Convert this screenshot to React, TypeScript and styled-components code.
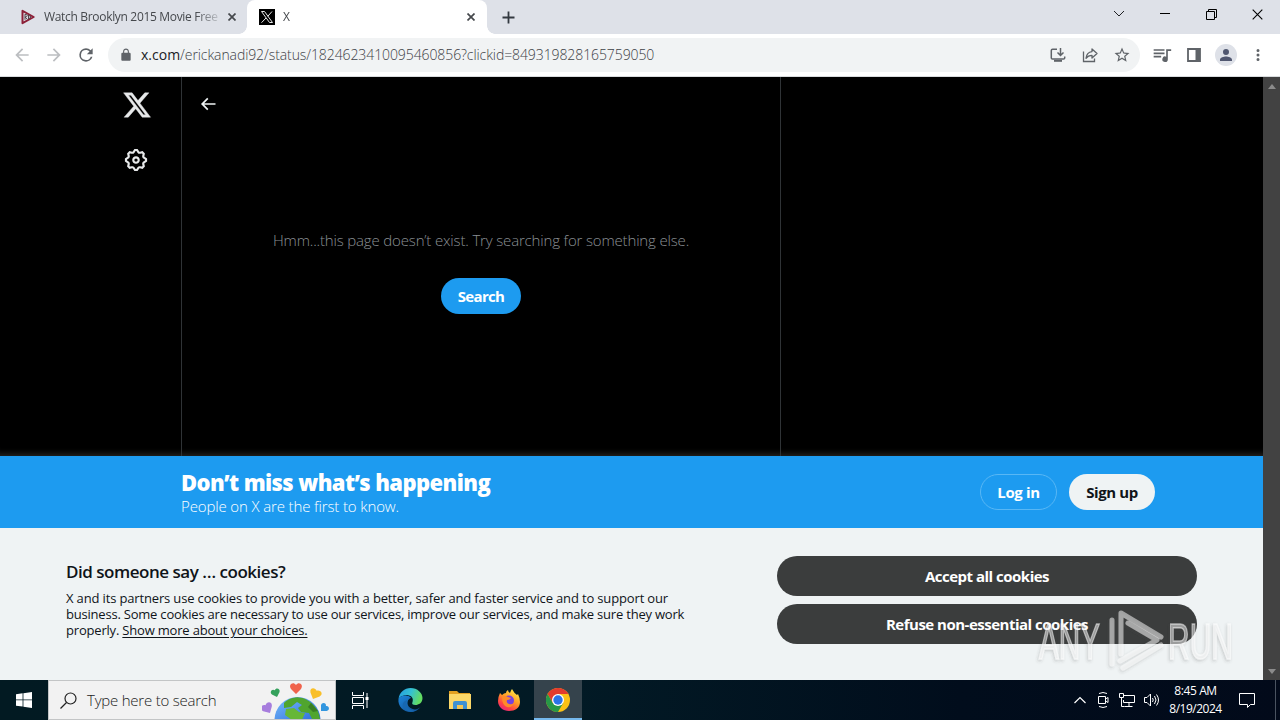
import React from "react";
import styled, { createGlobalStyle, css } from "styled-components";

const GlobalStyle = createGlobalStyle`
  * {
    box-sizing: border-box;
  }

  body {
    margin: 0;
    overflow: hidden;
    background: #000;
    font-family: "Open Sans", "Noto Sans", sans-serif;
  }

  svg {
    display: block;
    flex: none;
  }
`;

const Screen = styled.div`
  position: relative;
  display: flex;
  flex-direction: column;
  width: 1280px;
  height: 720px;
  overflow: hidden;
`;

interface ITextProps {
  $size: number
  $line?: number
  $weight?: number
  $color?: string
  $spacing?: number
}

const Text = styled.span<ITextProps>`
  display: block;
  white-space: nowrap;
  font-size: ${({ $size }) => $size}px;
  line-height: ${({ $line, $size }) => $line || $size + 4}px;
  font-weight: ${({ $weight }) => $weight || 400};
  color: ${({ $color }) => $color || "#0f1419"};
  letter-spacing: ${({ $spacing }) => $spacing || 0}px;
`;

/* browser window */

const TabStrip = styled.div`
  display: flex;
  height: 34px;
  flex: none;
  background: #dee1e8;
`;

const Tab = styled.div<{ $active?: boolean }>`
  position: relative;
  display: flex;
  align-items: center;
  width: ${({ $active }) => ($active ? 240 : 247)}px;
  padding: ${({ $active }) => ($active ? "0 12px 0 12px" : "0 11px 0 20px")};
  gap: 8px;
  ${({ $active }) => $active && css`
    background: #fff;
    border-radius: 8px 8px 0 0;

    &::before,
    &::after {
      content: "";
      position: absolute;
      bottom: 0;
      width: 8px;
      height: 8px;
    }

    &::before {
      left: -8px;
      background: radial-gradient(circle at 0 0, #dee1e8 7.5px, #fff 8px);
    }

    &::after {
      right: -8px;
      background: radial-gradient(circle at 100% 0, #dee1e8 7.5px, #fff 8px);
    }
  `}
`;

const TabTitle = styled.div`
  flex: 1;
  overflow: hidden;
  mask-image: linear-gradient(90deg, #000 86%, transparent 102%);
`;

const NewTab = styled.div`
  display: flex;
  align-items: center;
  flex: 1;
  padding-left: 15px;
`;

const WindowButtons = styled.div`
  display: flex;
  align-items: center;
  width: 184px;
  height: 28px;

  & > * {
    display: flex;
    justify-content: center;
    width: 46px;
  }
`;

const Toolbar = styled.div`
  display: flex;
  align-items: center;
  flex: none;
  height: 43px;
  padding: 0 0 1px 12px;
  background: #fff;
  border-bottom: 1px solid #d9dcde;
`;

const NavButtons = styled.div`
  display: flex;
  flex: none;
  gap: 12px;
  width: 96px;
`;

const AddressBar = styled.div`
  display: flex;
  align-items: center;
  flex: none;
  width: 1032px;
  height: 34px;
  padding: 0 9px 0 11px;
  border-radius: 17px;
  background: #f1f3f4;
`;

const Url = styled.div`
  display: flex;
  flex: 1;
  padding: 1px 0 0 8px;
`;

const AddressIcons = styled.div`
  display: flex;
  gap: 14px;
`;

const ToolbarIcons = styled.div`
  display: flex;
  align-items: center;
  padding-left: 12px;
  gap: 12px;

  & > :nth-child(2) {
    margin-left: 2px;
  }

  & > :nth-child(3) {
    margin-left: 1px;
  }
`;

const Avatar = styled.div`
  display: flex;
  align-items: center;
  justify-content: center;
  width: 22px;
  height: 22px;
  border-radius: 50%;
  background: #dee1e8;
`;

/* page */

const Viewport = styled.div`
  display: flex;
  height: 603px;
  flex: none;
  background: #000;
`;

const Page = styled.div`
  display: flex;
  flex-direction: column;
  width: 1263px;
`;

const Scrollbar = styled.div`
  display: flex;
  flex-direction: column;
  align-items: center;
  justify-content: space-between;
  width: 17px;
  padding: 7px 0 6px;
  background: #424242;
`;

const Main = styled.div`
  display: flex;
  height: 379px;
  box-shadow: inset 0 -8px 6px -6px #292724;
`;

const Sidebar = styled.div`
  display: flex;
  flex-direction: column;
  width: 181px;
  padding: 13px 0 0 122px;
  gap: 27px;

  & > :last-child {
    margin-left: 1px;
  }
`;

const Column = styled.div`
  width: 600px;
  border: solid #2f3336;
  border-width: 0 1px;
`;

const ColumnHeader = styled.div`
  height: 53px;
  padding: 17px 0 0 16px;
`;

const Empty = styled.div`
  display: flex;
  flex-direction: column;
  align-items: center;
  padding-top: 100px;
  gap: 28px;
`;

interface IPillProps {
  $width: number
  $height?: number
  $bg?: string
  $border?: string
}

const Pill = styled.div<IPillProps>`
  display: flex;
  align-items: center;
  justify-content: center;
  width: ${({ $width }) => $width}px;
  height: ${({ $height }) => $height || 36}px;
  padding-top: 1px;
  border-radius: 20px;
  border: 1px solid ${({ $border }) => $border || "transparent"};
  background: ${({ $bg }) => $bg || "transparent"};
`;

const LoginBar = styled.div`
  display: flex;
  justify-content: space-between;
  height: 72px;
  padding: 12px 108px 0 181px;
  background: #1d9bf0;
`;

const LoginButtons = styled.div`
  display: flex;
  gap: 12px;
  padding-top: 6px;
`;

const Cookies = styled.div`
  display: flex;
  justify-content: space-between;
  flex: 1;
  padding: 28px 66px 0;
  background: #eff3f4;
`;

const CookieCopy = styled.div`
  padding-top: 6px;

  & > :first-child {
    margin-bottom: 8px;
  }
`;

const CookieButtons = styled.div`
  display: flex;
  flex-direction: column;
  gap: 8px;
`;

const Underlined = styled.span`
  text-decoration: underline;
  text-underline-offset: 2px;
`;

const Watermark = styled.div`
  position: absolute;
  left: 1032px;
  top: 604px;
`;

/* taskbar */

const Taskbar = styled.div`
  display: flex;
  height: 40px;
  flex: none;
  background: linear-gradient(90deg, #021a22 0%, #021a25 45%, #010d1c 75%, #020a1a 100%);
`;

const TaskButton = styled.div<{ $active?: boolean; $width?: number }>`
  display: flex;
  align-items: center;
  justify-content: center;
  width: ${({ $width }) => $width || 49.5}px;
  height: 40px;
  ${({ $active }) => $active && css`
    background: #35434c;
    border-bottom: 2px solid #76b9ed;
    padding-top: 2px;
  `}
`;

const SearchBox = styled.div`
  display: flex;
  align-items: center;
  width: 288px;
  padding-left: 11px;
  gap: 10px;
  border: 1px solid #c3c5c6;
  background: #f2f2f2;

  & > :last-child {
    margin-left: auto;
    margin-right: 1px;
  }
`;

const Spacer = styled.div`
  flex: 1;
`;

const Tray = styled.div`
  display: flex;
  align-items: center;
  padding-right: 13px;
  gap: 7px;
`;

const Clock = styled.div`
  width: 55px;
  text-align: center;
`;

const DesktopEdge = styled.div`
  width: 5px;
  border-left: 1px solid #4a5360;
`;

const XLogo = () => (
  <svg width="30" height="30" viewBox="0 0 24 24" fill="#e7e9ea" stroke="#e7e9ea" strokeWidth=".35">
    <path d="M18.244 2.25h3.308l-7.227 8.26 8.502 11.24H16.17l-5.214-6.817L4.99 21.75H1.68l7.73-8.835L1.254 2.25H8.08l4.713 6.231zm-1.161 17.52h1.833L7.084 4.126H5.117z" />
  </svg>
);

const CloseIcon = ({ size = 8, width = 1.7, color = "#45484c" }) => (
  <svg width={size} height={size} viewBox="0 0 8 8" stroke={color} strokeWidth={width}>
    <path d="M.5.5l7 7M7.5.5l-7 7" />
  </svg>
);

const Material = ({ d, size = 18, color = "#5f6368" }: { d: string; size?: number; color?: string }) => (
  <svg width={size} height={size} viewBox="0 0 24 24" fill={color}>
    <path d={d} />
  </svg>
);

const BACK = "M20 11H7.83l5.59-5.59L12 4l-8 8 8 8 1.41-1.41L7.83 13H20v-2z";
const FORWARD = "M12 4l-1.41 1.41L16.17 11H4v2h12.17l-5.58 5.59L12 20l8-8z";
const RELOAD = "M17.65 6.35A7.96 7.96 0 0 0 12 4a8 8 0 1 0 7.73 10h-2.08A6 6 0 1 1 12 6c1.66 0 3.14.69 4.22 1.78L13 11h7V4l-2.35 2.35z";
const LOCK = "M18 8h-1V6c0-2.76-2.24-5-5-5S7 3.24 7 6v2H6c-1.1 0-2 .9-2 2v10c0 1.1.9 2 2 2h12c1.1 0 2-.9 2-2V10c0-1.1-.9-2-2-2zM8.9 8V6c0-1.71 1.39-3.1 3.1-3.1s3.1 1.39 3.1 3.1v2H8.9z";
const STAR = "M22 9.24l-7.19-.62L12 2 9.19 8.63 2 9.24l5.46 4.73L5.82 21 12 17.27 18.18 21l-1.63-7.03L22 9.24zM12 15.4l-3.76 2.27 1-4.28-3.32-2.88 4.38-.38L12 6.1l1.71 4.04 4.38.38-3.32 2.88 1 4.28L12 15.4z";
const QUEUE = "M2 5h13v2H2zM2 9h13v2H2zM2 13h9v2H2zM17 5h6v2.2h-4V17a3.3 3.3 0 1 1-2-3z";
const PERSON = "M12 12a4 4 0 1 0 0-8 4 4 0 0 0 0 8zm0 2c-3 0-8 1.4-8 4.3V20h16v-1.7c0-2.9-5-4.3-8-4.3z";
const MENU = "M12 8a2 2 0 1 0 0-4 2 2 0 0 0 0 4zm0 2a2 2 0 1 0 0 4 2 2 0 0 0 0-4zm0 6a2 2 0 1 0 0 4 2 2 0 0 0 0-4z";
const GEAR = "M10.54 1.75h2.92l1.57 2.36c.11.17.32.25.53.21l2.53-.59 2.17 2.17-.58 2.54c-.05.2.04.41.21.53l2.36 1.57v2.92l-2.36 1.57c-.17.12-.26.33-.21.53l.58 2.54-2.17 2.17-2.53-.59c-.21-.04-.42.04-.53.21l-1.57 2.36h-2.92l-1.58-2.36c-.11-.17-.32-.25-.52-.21l-2.54.59-2.17-2.17.58-2.54c.05-.2-.03-.41-.21-.53l-2.35-1.57v-2.92L4.1 8.97c.18-.12.26-.33.21-.53L3.73 5.9 5.9 3.73l2.54.59c.2.04.41-.04.52-.21l1.58-2.36zm1.07 2l-.98 1.47C10.05 6.08 9 6.5 7.99 6.27l-1.46-.34-.6.6.33 1.46c.24 1.01-.18 2.07-1.05 2.64l-1.46.98v.78l1.46.98c.87.57 1.29 1.63 1.05 2.64l-.33 1.46.6.6 1.46-.34c1.01-.23 2.06.19 2.64 1.05l.98 1.47h.78l.97-1.47c.58-.86 1.63-1.28 2.65-1.05l1.45.34.61-.6-.34-1.46c-.23-1.01.18-2.07 1.05-2.64l1.47-.98v-.78l-1.47-.98c-.87-.57-1.28-1.63-1.05-2.64l.34-1.46-.61-.6-1.45.34c-1.02.23-2.07-.19-2.65-1.05l-.97-1.47h-.78zM12 10.5c-.83 0-1.5.67-1.5 1.5s.67 1.5 1.5 1.5 1.5-.67 1.5-1.5-.67-1.5-1.5-1.5zM8.5 12c0-1.93 1.56-3.5 3.5-3.5 1.93 0 3.5 1.57 3.5 3.5s-1.57 3.5-3.5 3.5c-1.94 0-3.5-1.57-3.5-3.5z";
const X_BACK = "M7.414 13l5.043 5.04-1.414 1.42L3.586 12l7.457-7.46 1.414 1.42L7.414 11H21v2H7.414z";

const PlayFavicon = () => (
  <svg width="16" height="16" viewBox="0 0 16 16" fill="none">
    <path d="M2.5 1.8v12.4L13.7 8z" stroke="#8c2038" strokeWidth="2" strokeLinejoin="round" />
    <path d="M5 5.2v5.6M5 5.5c3-.5 3 2.5 0 2.5l2.5 2.4M8.5 6v4l2.5-2z" stroke="#54424a" strokeWidth="1" />
  </svg>
);

const XFavicon = () => (
  <svg width="16" height="16" viewBox="0 0 16 16">
    <path d="M0 0h16v16H0z" fill="#000" />
    <path d="M2.5 2.5h3L13.5 13.5h-3zM13 2.5L8.8 7.3M7 9l-4.500 4.700" fill="none" stroke="#e8e8e8" />
  </svg>
);

const InstallIcon = () => (
  <svg width="18" height="18" viewBox="0 0 18 18" fill="none" stroke="#5f6368" strokeWidth="1.5">
    <path d="M8 3.200H3.500Q2.300 3.200 2.300 4.400V12q0 1 1.200 1h11q1.200 0 1.200-1v-1.500M11.500 2v7M8.500 6.500l3 3 3-3" />
    <path d="M5 14.800h8" strokeWidth="2" />
  </svg>
);

const ShareIcon = () => (
  <svg width="18" height="18" viewBox="0 0 18 18" fill="none" stroke="#5f6368" strokeWidth="1.3">
    <path d="M2.500 5.500V15.500H13.500V12.500" />
    <path d="M11 3l5 4.500-5 4.500V9.300C8 9.300 6.400 10.300 5 12.300 5.400 8.600 7.500 6 11 5.600z" strokeLinejoin="round" />
  </svg>
);

const PanelIcon = () => (
  <svg width="16" height="16" viewBox="0 0 16 16">
    <path d="M2 2h12v12H2z" fill="none" stroke="#5f6368" strokeWidth="1.8" />
    <path d="M9.500 2H14v12H9.500z" fill="#5f6368" />
  </svg>
);

const Hearts = () => (
  <svg width="72" height="38" viewBox="0 0 72 38">
    <defs>
      <clipPath id="globe">
        <circle cx="35.5" cy="39" r="23" />
      </clipPath>
      <linearGradient id="sea" x1="0" y1="0" x2="1" y2="1">
        <stop offset="0" stopColor="#7dc2fb" />
        <stop offset="1" stopColor="#2866dc" />
      </linearGradient>
    </defs>
    <g clipPath="url(#globe)">
      <path d="M12 14h48v26H12z" fill="url(#sea)" />
      <path d="M22 22c5-6 16-8 23-3 7 4 12 10 13 19h-8l-3-6-8-1-3-4 4-3-5-3-6 5-7 1z" fill="#50a52e" />
      <path d="M24 28l8-1 5 4 6 1-3 7H30l-7-5z" fill="#66b737" />
      <path d="M49 22l7 8-5 1-5-5z" fill="#397f24" />
    </g>
    <path d="M0 0L-5-5C-8-9-3-13 0-9 3-13 8-9 5-5z" transform="translate(34 13)" fill="#f0634c" />
    <path d="M0 0L-4-4C-6-7-2-10 0-7 2-10 6-7 4-4z" transform="translate(15 16) rotate(-18)" fill="#35a15c" />
    <path d="M0 0L-5-5C-8-9-3-12 0-9 3-12 8-9 5-5z" transform="translate(51 18) rotate(24)" fill="#f9bf28" />
    <path d="M0 0L-5-5C-8-9-3-12 0-9 3-12 8-9 5-5z" transform="translate(8 32) rotate(-30)" fill="#a77ddd" />
    <path d="M0 0L-4-4C-6-7-2-10 0-7 2-10 6-7 4-4z" transform="translate(59 30) rotate(45)" fill="#3296df" />
  </svg>
);

const WindowsIcon = () => (
  <svg width="16" height="16" viewBox="0 0 16 16" fill="#fff">
    <path d="M0 2.200l6.600-.9v6.200H0zM7.400 1.200L16 0v7.500H7.400zM0 8.300h6.600v6.300L0 13.700zM7.400 8.300H16V16l-8.600-1.200z" />
  </svg>
);

const EdgeIcon = () => (
  <svg width="26" height="26" viewBox="-.5 0 26 26">
    <defs>
      <linearGradient id="edgeTop" x1="0" y1="0" x2="1" y2=".3">
        <stop offset="0" stopColor="#239be0" />
        <stop offset=".55" stopColor="#35c1d2" />
        <stop offset="1" stopColor="#63dc62" />
      </linearGradient>
      <linearGradient id="edgeLow" x1="0" y1="0" x2="1" y2="1">
        <stop offset="0" stopColor="#1d86dc" />
        <stop offset="1" stopColor="#114a8b" />
      </linearGradient>
    </defs>
    <path d="M1 12C2 5 7 1 13 1c7 0 12 5 12 10 0 5-4 7-7 7-3 0-4-1-3-3 1-3 0-6-5-7-4 0-7 1-9 4z" fill="url(#edgeTop)" />
    <path d="M1 12c2-4 9-5 13-1-4 0-6 7-1 10 3 2 7 2 10-1-2 3-6 5-10 5C6 25 0 19 1 12z" fill="url(#edgeLow)" />
    <path d="M10 13c-4 6 3 12 9 10-4 3-10 2-13-2-2-4 0-7 4-8z" fill="#1767b0" />
  </svg>
);

const FolderIcon = () => (
  <svg width="24" height="22" viewBox="0 0 24 22">
    <path d="M1 2h8l2 2h11v5H1z" fill="#e2a021" />
    <path d="M1 5h22v15H1z" fill="#fbd768" />
    <path d="M5 20v-6q0-2 2-2h10q2 0 2 2v6h-4v-4H9v4z" fill="#3e91d1" />
    <path d="M9 16h6v4H9z" fill="#f3c653" />
  </svg>
);

const FirefoxIcon = () => (
  <svg width="24" height="24" viewBox="0 0 24 24">
    <defs>
      <linearGradient id="fox" x1=".8" y1="0" x2=".2" y2="1">
        <stop offset="0" stopColor="#fff04a" />
        <stop offset=".45" stopColor="#ff9a26" />
        <stop offset=".75" stopColor="#ff4544" />
        <stop offset="1" stopColor="#e42283" />
      </linearGradient>
    </defs>
    <path d="M3 5l2 2q2-2 4-2 0-2 2-3 0 2 2 3 1-3 2-4 2 4 5 6l1-1q2 4 2 8c0 6-5 9-11 9S1 19 1 13q0-4 2-8z" fill="url(#fox)" />
    <circle cx="12" cy="12.5" r="5" fill="#7542e0" />
    <path d="M5 9q3-2 6 0l3 1q-1 2-4 2-1 3 2 4 3 1 5-1-2 5-7 4-5-2-5-10z" fill="#ff8b28" />
  </svg>
);

const ChromeIcon = () => (
  <svg width="24" height="24" viewBox="0 0 24 24">
    <circle cx="12" cy="12" r="12" fill="#fbc116" />
    <path d="M1.600 6A12 12 0 0 1 22.400 6H12l-5.200 9z" fill="#e33b2e" />
    <path d="M1.600 6A12 12 0 0 0 12 24l5.200-9H6.800z" fill="#279847" />
    <circle cx="12" cy="12" r="6" fill="#fff" />
    <circle cx="12" cy="12" r="4.7" fill="#2a74e8" />
  </svg>
);

const AnyRun = () => (
  <svg width="220" height="76" viewBox="0 0 220 76">
    <defs>
      <filter id="soft" x="-10%" y="-10%" width="120%" height="120%">
        <feDropShadow dx="-1" dy="1.5" stdDeviation="1.5" floodColor="#444" floodOpacity=".4" />
      </filter>
    </defs>
    <g filter="url(#soft)" fill="#fff" fillOpacity=".45" stroke="#fff" strokeOpacity=".5">
      <g fontFamily="Liberation Sans, sans-serif" fontSize="50" strokeWidth="1.5">
        <text x="7" y="55" textLength="61" lengthAdjust="spacingAndGlyphs">ANY</text>
        <text x="136" y="55" textLength="65" lengthAdjust="spacingAndGlyphs">RUN</text>
      </g>
      <g fill="none" strokeWidth="5" strokeLinecap="round" strokeLinejoin="round">
        <path d="M89 50V9l40 24" />
        <path d="M80 16v44M96 19l29 17-37 21" />
        <path d="M91 64l38-23" />
      </g>
    </g>
  </svg>
);

const App = () => {
  return (
    <Screen>
      <GlobalStyle />
      <TabStrip>
        <Tab>
          <PlayFavicon />
          <TabTitle>
            <Text $size={12} $color="#45484c" $spacing={-0.32}>Watch Brooklyn 2015 Movie Free</Text>
          </TabTitle>
          <CloseIcon />
        </Tab>
        <Tab $active>
          <XFavicon />
          <TabTitle>
            <Text $size={12} $color="#45484c">X</Text>
          </TabTitle>
          <CloseIcon />
        </Tab>
        <NewTab>
          <svg width="13" height="13" viewBox="0 0 13 13" stroke="#333940" strokeWidth="1.8">
            <path d="M6.500 .5v12M.5 6.500h12" />
          </svg>
        </NewTab>
        <WindowButtons>
          <div>
            <svg width="12" height="8" viewBox="0 0 12 8" fill="none" stroke="#202124"><path d="M1 1l5 5 5-5" /></svg>
          </div>
          <div>
            <svg width="10" height="2" viewBox="0 0 10 2"><path d="M0 0h10v1H0z" /></svg>
          </div>
          <div>
            <svg width="11" height="11" viewBox="0 0 11 11" fill="none" stroke="#000">
              <path d="M.5 2.500h8v8h-8zM2.500 2.500v-2h8v8h-2" />
            </svg>
          </div>
          <div><CloseIcon size={11} width={0.8} color="#000" /></div>
        </WindowButtons>
      </TabStrip>
      <Toolbar>
        <NavButtons>
          <Material d={BACK} size={20} color="#bcbec1" />
          <Material d={FORWARD} size={20} color="#bcbec1" />
          <Material d={RELOAD} size={20} />
        </NavButtons>
        <AddressBar>
          <Material d={LOCK} size={14} />
          <Url>
            <Text $size={14} $color="#202124">x.com</Text>
            <Text $size={14} $weight={300} $color="#3d4146" $spacing={-0.09}>/erickanadi92/status/1824623410095460856?clickid=849319828165759050</Text>
          </Url>
          <AddressIcons>
            <InstallIcon />
            <ShareIcon />
            <Material d={STAR} />
          </AddressIcons>
        </AddressBar>
        <ToolbarIcons>
          <Material d={QUEUE} size={20} />
          <PanelIcon />
          <Avatar><Material d={PERSON} size={18} color="#505770" /></Avatar>
          <Material d={MENU} size={18} />
        </ToolbarIcons>
      </Toolbar>
      <Viewport>
        <Page>
          <Main>
            <Sidebar>
              <XLogo />
              <Material d={GEAR} size={26} color="#e7e9ea" />
            </Sidebar>
            <Column>
              <ColumnHeader>
                <Material d={X_BACK} size={20} color="#eff3f4" />
              </ColumnHeader>
              <Empty>
                <Text $size={15} $line={20} $weight={300} $color="#8b9095" $spacing={-0.16}>Hmm...this page doesn’t exist. Try searching for something else.</Text>
                <Pill $width={80} $bg="#1d9bf0">
                  <Text $size={15} $weight={700} $color="#fff" $spacing={-0.7}>Search</Text>
                </Pill>
              </Empty>
            </Column>
          </Main>
          <LoginBar>
            <div>
              <Text $size={22} $line={29} $weight={800} $color="#fff" $spacing={-0.6}>Don’t miss what’s happening</Text>
              <Text $size={15} $line={19} $weight={300} $color="#fff" $spacing={-0.13}>People on X are the first to know.</Text>
            </div>
            <LoginButtons>
              <Pill $width={77} $border="#58b7f5">
                <Text $size={15} $weight={700} $color="#fff" $spacing={-0.35}>Log in</Text>
              </Pill>
              <Pill $width={86} $bg="#eff3f4">
                <Text $size={15} $weight={700} $spacing={-0.4}>Sign up</Text>
              </Pill>
            </LoginButtons>
          </LoginBar>
          <Cookies>
            <CookieCopy>
              <Text $size={17} $line={20} $weight={600} $spacing={-0.48}>Did someone say … cookies?</Text>
              <Text $size={13} $line={16} $spacing={-0.15}>X and its partners use cookies to provide you with a better, safer and faster service and to support our</Text>
              <Text $size={13} $line={16} $spacing={-0.21}>business. Some cookies are necessary to use our services, improve our services, and make sure they work</Text>
              <Text $size={13} $line={16} $spacing={-0.19}>properly. <Underlined>Show more about your choices.</Underlined></Text>
            </CookieCopy>
            <CookieButtons>
              <Pill $width={420} $height={40} $bg="#3b3d3d">
                <Text $size={15} $weight={700} $color="#fff" $spacing={-0.5}>Accept all cookies</Text>
              </Pill>
              <Pill $width={420} $height={40} $bg="#3b3d3d">
                <Text $size={15} $weight={700} $color="#fff" $spacing={-0.5}>Refuse non-essential cookies</Text>
              </Pill>
            </CookieButtons>
          </Cookies>
        </Page>
        <Scrollbar>
          <svg width="8" height="5" viewBox="0 0 8 5" fill="#8b8b8b"><path d="M0 5l4-5 4 5z" /></svg>
          <svg width="8" height="5" viewBox="0 0 8 5" fill="#8b8b8b"><path d="M0 0h8L4 5z" /></svg>
        </Scrollbar>
      </Viewport>
      <Taskbar>
        <TaskButton $width={48}><WindowsIcon /></TaskButton>
        <SearchBox>
          <svg width="17" height="17" viewBox="0 0 17 17" fill="none" stroke="#222" strokeWidth="1.2">
            <circle cx="10.5" cy="6.5" r="5.5" />
            <path d="M6.500 10.500L.5 16.500" />
          </svg>
          <Text $size={15} $weight={300} $color="#222" $spacing={-0.22}>Type here to search</Text>
          <Hearts />
        </SearchBox>
        <TaskButton>
          <svg width="17" height="17" viewBox="0 0 17 17" fill="none" stroke="#fff">
            <path d="M.5 0v3.500h11V0M.5 5.500h11v6H.5zM.5 17v-3.500h11V17M15 1v15" />
            <path d="M13.500 5h3v3h-3z" fill="#fff" stroke="none" />
          </svg>
        </TaskButton>
        <TaskButton><EdgeIcon /></TaskButton>
        <TaskButton><FolderIcon /></TaskButton>
        <TaskButton><FirefoxIcon /></TaskButton>
        <TaskButton $active $width={48}><ChromeIcon /></TaskButton>
        <Spacer />
        <Tray>
          <svg width="12" height="8" viewBox="0 0 12 8" fill="none" stroke="#fff" strokeWidth="1.2"><path d="M.5 7L6 1.500 11.500 7" /></svg>
          <svg width="18" height="18" viewBox="-1 0 18 18" fill="none" stroke="#fff">
            <path d="M4.500 5.500h7v7h-7zM11.500 8l2.500-1.500v5L11.500 10M5 2.500q4-2 8 0M5 15.500q4 2 8 0" />
          </svg>
          <svg width="18" height="16" viewBox="0 0 18 16" fill="none" stroke="#fff">
            <path d="M6 3.500h10.500v7H5.500V8M11 10.500v4M6.500 14.500h8M1.500 1.500h4v4h-4zM3.500 5.500v9h3" />
          </svg>
          <svg width="18" height="16" viewBox="0 0 18 16" fill="none" stroke="#fff">
            <path d="M1.500 5.500H4L7.500 2v12L4 10.500H1.500zM9.500 6q1.500 2 0 4M11.500 4q3 4 0 8M13.500 2.500q4 5.500 0 11" />
          </svg>
          <Clock>
            <Text $size={12} $line={18} $color="#fff" $spacing={-0.4}>8:45 AM</Text>
            <Text $size={12} $line={18} $color="#fff" $spacing={-0.5}>8/19/2024</Text>
          </Clock>
          <svg width="32" height="17" viewBox="-9 0 32 17" fill="none" stroke="#fff"><path d="M.5 1.500h15v11h-4L8.500 15.500v-3h-8z" /></svg>
        </Tray>
        <DesktopEdge />
      </Taskbar>
      <Watermark><AnyRun /></Watermark>
    </Screen>
  );
};

export default App;
